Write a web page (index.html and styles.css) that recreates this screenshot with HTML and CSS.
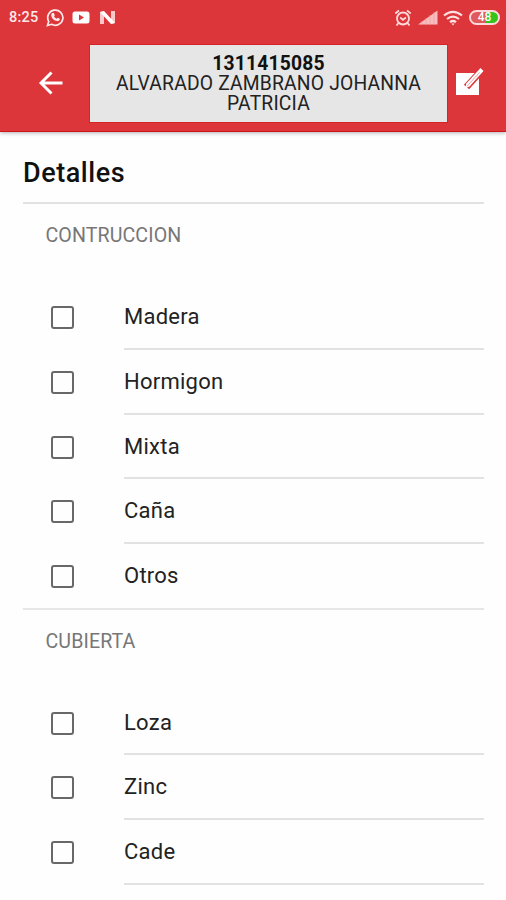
FILE: index.html
```html
<!DOCTYPE html>
<html lang="es">
<head>
<meta charset="utf-8">
<meta name="viewport" content="width=device-width, initial-scale=1">
<title>Detalles</title>
<link rel="stylesheet" href="styles.css">
</head>
<body>
<header class="top">
  <div class="status">
    <span class="clock">8:25</span>
    <svg class="whatsapp" width="19" height="19" viewBox="0 0 19 19"><path d="M1.5 17.5l1.2-4.1A7.6 7.6 0 1 1 5.6 16.300z" fill="none" stroke="#ffe9e9" stroke-width="1.7"/><path d="M6.500 5.100l1.400-.1.9 2.200-.8 1.100c.6 1.100 1.500 2 2.700 2.500l1-1 2.200 1c0 1.500-1.300 2.500-2.700 2.300-3.200-.5-5.600-3-6-5.700-.1-1 .5-2 1.300-2.300z" fill="#ffe9e9"/></svg>
    <svg class="video" width="18" height="13" viewBox="0 0 18 13"><path fill-rule="evenodd" d="M3 .5h12Q17.500.5 17.500 3v7q0 2.500-2.500 2.500H3Q.5 12.500.5 10V3Q.5.5 3 .5zM7 3.500v6l5-3z" fill="#fff"/></svg>
    <svg class="nougat" width="17" height="13" viewBox="0 0 17 13"><path d="M1 1l4-1v13H1zM12 0h4v12l-4 1z" fill="#f9c9ca"/><path d="M1 1l4-1 11 12-4 1z" fill="#fff"/></svg>
    <span class="spacer"></span>
    <svg class="alarm" width="18" height="18" viewBox="0 0 18 18" fill="none" stroke="#ffd9da" stroke-width="1.800"><circle cx="9" cy="9.500" r="6"/><path d="M1.300 4.500L5 1.500M16.700 4.500L13 1.500M4.500 14l-2 2.500M13.500 14l2 2.500M6.200 8.500L9 10.800l3-2.300"/></svg>
    <svg class="signal" width="20" height="15" viewBox="0 0 20 15"><path d="M0 14.500L19.500.5v14z" fill="#f8bcbe"/><path d="M4 11v4M8 8v7M12 5v10M16 2v13" stroke="#ee9da0" stroke-width=".7"/></svg>
    <svg class="wifi" width="20" height="16" viewBox="0 0 20 16" fill="none" stroke="#ffe0e1" stroke-width="2.200"><path d="M1 5.500Q10-1.800 19 5.500M4 9q6-4.800 12 0M7 12.200q3-2.400 6 0"/><path d="M8.300 13.500h3.400L10 15.500z" fill="#ffe0e1" stroke="none"/></svg>
    <span class="battery">48</span>
  </div>
  <div class="toolbar">
    <svg class="back" width="26" height="26" viewBox="0 0 26 26" fill="none" stroke="#fff" stroke-width="2.900"><path d="M24.500 13H3M13.500 2.500L3 13l10.500 10.500"/></svg>
    <div class="person"><strong>1311415085</strong><span>ALVARADO ZAMBRANO JOHANNA PATRICIA</span></div>
    <svg class="edit" width="30" height="30" viewBox="0 0 30 30"><path d="M1 5h23v22H1z" fill="#fff"/><path d="M11.500 19L26.500 2.500" stroke="#dc353a" stroke-width="7"/><path d="M10 20.500l1.300-5L25.500 0l3 3L14.500 18.500z" fill="#fff"/><path d="M12 18.300L24.500 4.500" stroke="#e9888a" stroke-width=".8"/></svg>
  </div>
</header>
<main>
  <h1>Detalles</h1>
  <section>
    <h2>CONTRUCCION</h2>
    <label class="row"><input type="checkbox"><span>Madera</span></label>
    <label class="row"><input type="checkbox"><span>Hormigon</span></label>
    <label class="row"><input type="checkbox"><span>Mixta</span></label>
    <label class="row"><input type="checkbox"><span>Caña</span></label>
    <label class="row"><input type="checkbox"><span>Otros</span></label>
  </section>
  <section>
    <h2>CUBIERTA</h2>
    <label class="row"><input type="checkbox"><span>Loza</span></label>
    <label class="row"><input type="checkbox"><span>Zinc</span></label>
    <label class="row"><input type="checkbox"><span>Cade</span></label>
  </section>
</main>
</body>
</html>
```
FILE: styles.css
```css
* { box-sizing: border-box; }
body { margin: 0; height: 900px; overflow: hidden; background: #fefefe; color: #222; font-family: Roboto, sans-serif; }
svg { display: block; flex: none; }
.top { height: 132px; background: #dc353a; border-bottom: 1px solid #cf1519; box-shadow: 0 1px 4px rgba(0,0,0,.3); }
.status { height: 35px; display: flex; align-items: center; padding: 0 6px 0 9px; }
.clock { width: 37px; font-size: 14.5px; font-weight: 500; line-height: 20px; color: #ffe9e9; letter-spacing: .2px; }
.video { margin-left: 7px; }
.nougat { margin-left: 9px; }
.spacer { flex: 1; }
.signal { margin-left: 6px; }
.wifi { margin-left: 5px; }
.battery { width: 31px; height: 15px; margin-left: 6px; border: 2px solid #ffd9da; border-radius: 8px; background: linear-gradient(90deg, #e0595c 0 55%, #35c41f 55%); color: #fff; font-size: 12px; font-weight: 500; line-height: 11px; text-align: center; }
.toolbar { display: flex; align-items: center; height: 96px; padding: 0 21px 0 38px; }
.person { width: 358px; height: 77px; margin: 1px 0 0 26px; padding-top: 8px; background: #e6e6e6; box-shadow: 0 0 0 1px #d62327; text-align: center; font-size: 19.300px; line-height: 19.500px; letter-spacing: .18px; color: #222; }
.person strong { display: block; line-height: 21px; color: #111; }
.person span { display: block; padding: 0 20px; }
.edit { margin-left: 8px; }
main { padding: 0 22px 0 23px; }
h1 { height: 72px; margin: 0; padding-top: 23px; border-bottom: 2px solid #e2e2e2; font-size: 27px; font-weight: 500; line-height: 36px; letter-spacing: .55px; color: #111; }
h2 { height: 81.300px; margin: 0; padding: 19px 0 0 22.500px; font-size: 19.600px; font-weight: 400; line-height: 26px; letter-spacing: .1px; color: #777; }
.row { display: flex; align-items: center; height: 64.700px; padding-left: 28px; }
.row input { appearance: none; flex: none; width: 23px; height: 23px; margin: 0 50px 0 0; border: 2px solid #686868; border-radius: 3px; }
.row span { flex: 1; height: 64.700px; line-height: 64.700px; border-bottom: 2px solid #e2e2e2; font-size: 22px; letter-spacing: .25px; }
section:first-of-type .row:last-child { position: relative; }
section:first-of-type .row:last-child span { border-bottom: 0; }
section + section { border-top: 2px solid #e6e6e6; margin-top: -1px; }
section + section h2 { height: 81px; }
```
